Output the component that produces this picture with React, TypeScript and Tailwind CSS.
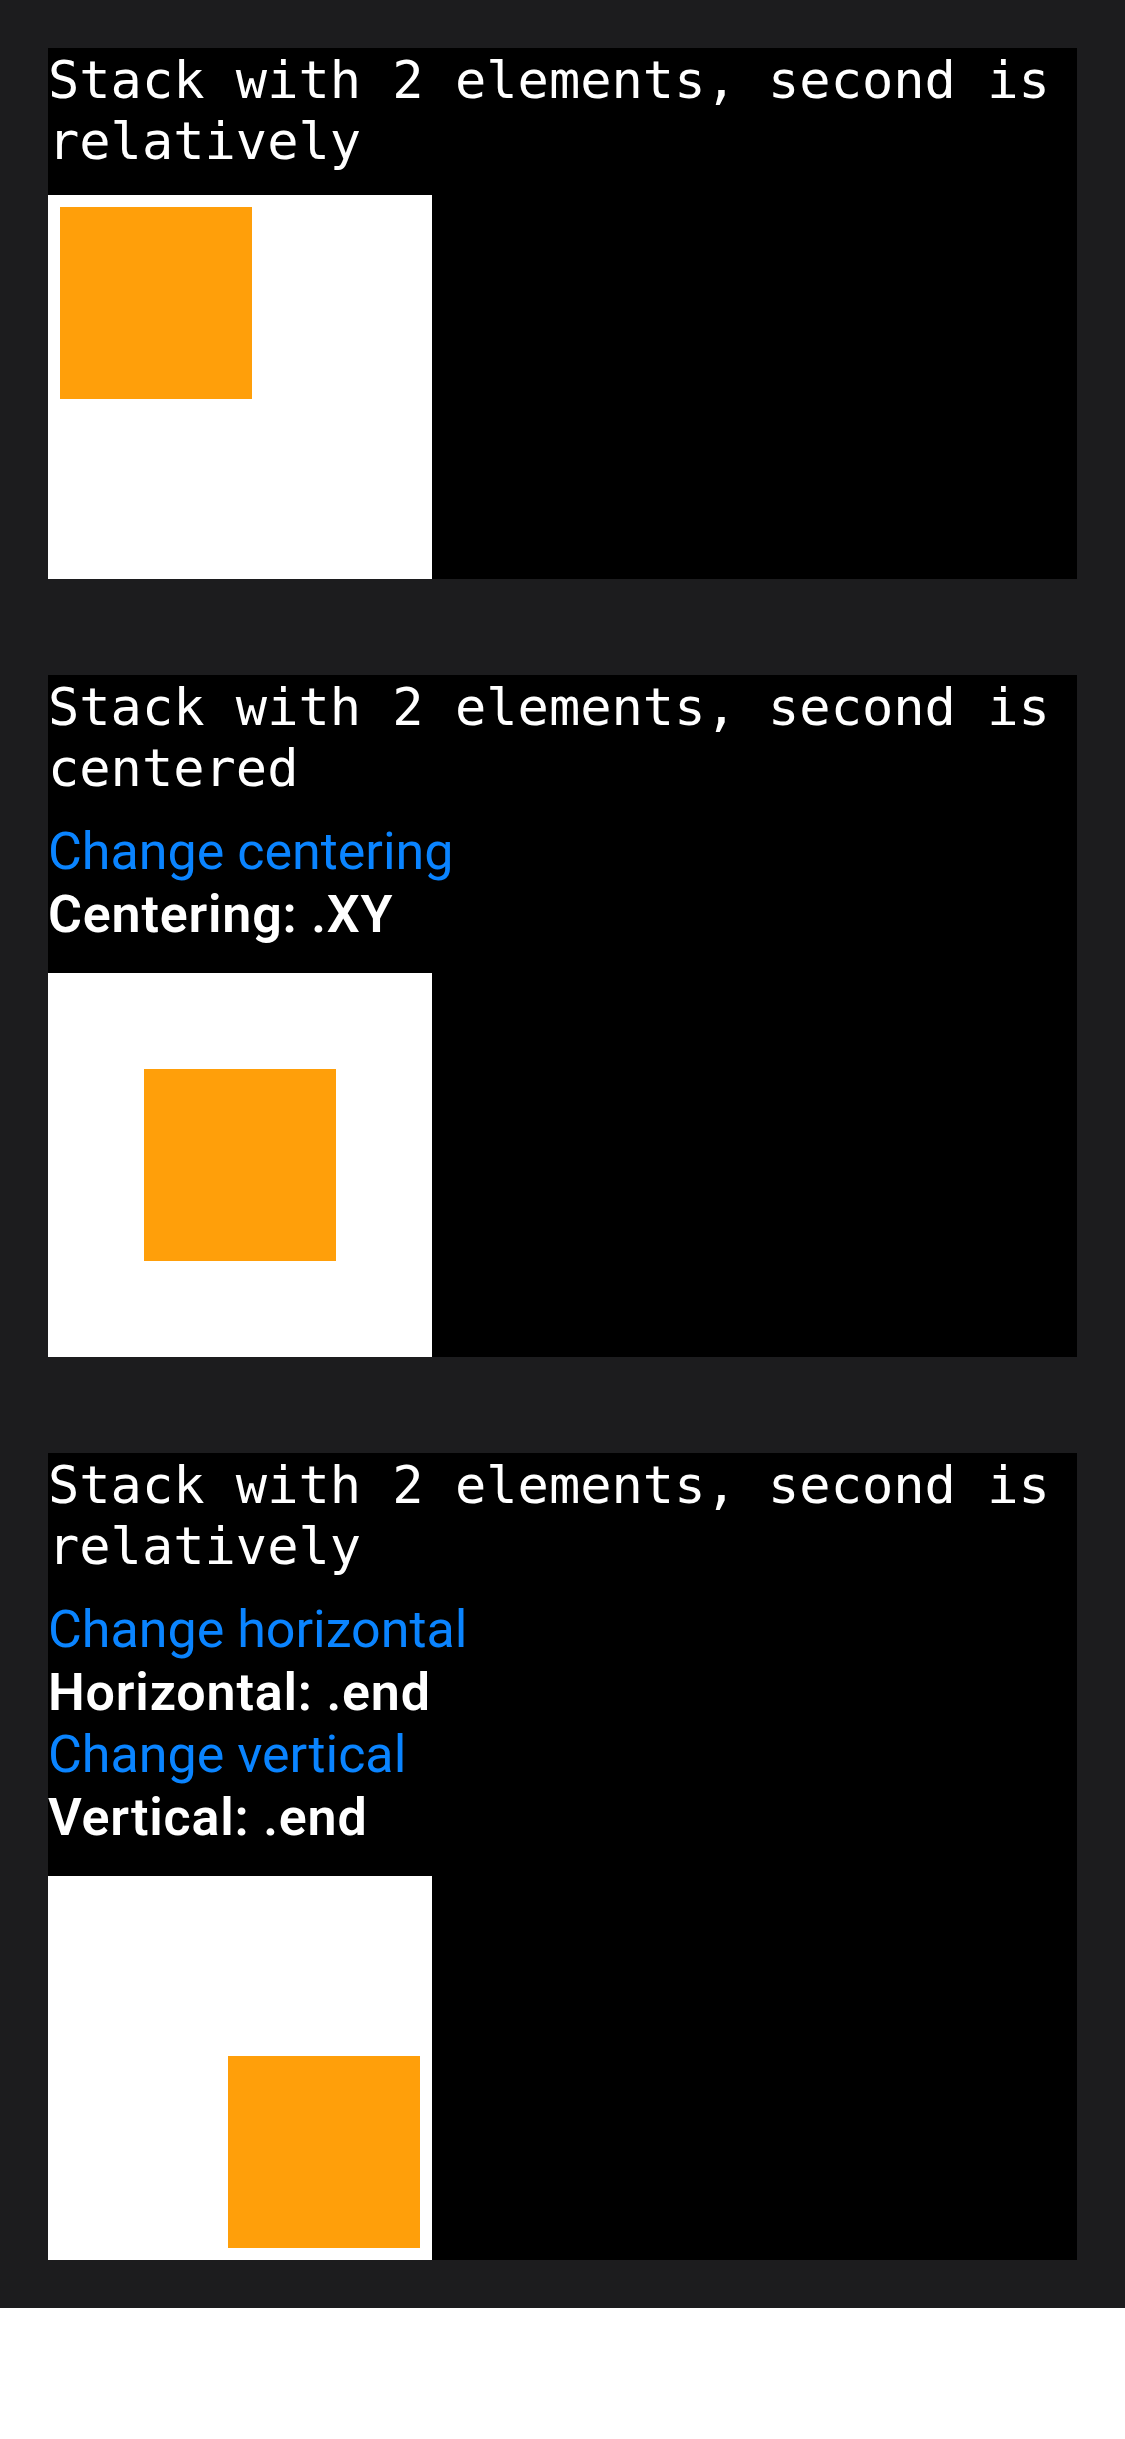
import React from 'react';

const mono = { fontFamily: '"DejaVu Sans Mono", "Liberation Mono", monospace' };
const sans = { fontFamily: 'Roboto, Inter, "Noto Sans", sans-serif' };

const Caption = ({ children }: { children: React.ReactNode }) => (
  <p className="text-[52px] leading-[61px] pt-[2px] text-white" style={mono}>
    {children}
  </p>
);

const Board = ({ place }: { place: string }) => (
  <div className={`flex w-[384px] h-[384px] bg-white p-[12px] ${place}`}>
    <div className="w-[192px] h-[192px] bg-[#ff9f0a]" />
  </div>
);

export default function App() {
  return (
    <div className="bg-[#1c1c1e] p-[48px] flex flex-col gap-[96px]">
      <section className="bg-black flex flex-col">
        <Caption>Stack with 2 elements, second is relatively</Caption>
        <div className="mt-[23px]">
          <Board place="items-start justify-start" />
        </div>
      </section>

      <section className="bg-black flex flex-col">
        <Caption>Stack with 2 elements, second is centered</Caption>
        <div className="mt-[22px] flex flex-col text-[52px] leading-[62.5px]" style={sans}>
          <button className="text-left text-[#0a84ff]">Change centering</button>
          <span className="font-semibold tracking-[0.8px] text-white">Centering: .XY</span>
        </div>
        <div className="mt-[27px]">
          <Board place="items-center justify-center" />
        </div>
      </section>

      <section className="bg-black flex flex-col">
        <Caption>Stack with 2 elements, second is relatively</Caption>
        <div className="mt-[22px] flex flex-col text-[52px] leading-[62.5px]" style={sans}>
          <button className="text-left text-[#0a84ff]">Change horizontal</button>
          <span className="font-semibold tracking-[0.8px] text-white">Horizontal: .end</span>
          <button className="text-left text-[#0a84ff]">Change vertical</button>
          <span className="font-semibold tracking-[0.8px] text-white">Vertical: .end</span>
        </div>
        <div className="mt-[27px]">
          <Board place="items-end justify-end" />
        </div>
      </section>
    </div>
  );
}
